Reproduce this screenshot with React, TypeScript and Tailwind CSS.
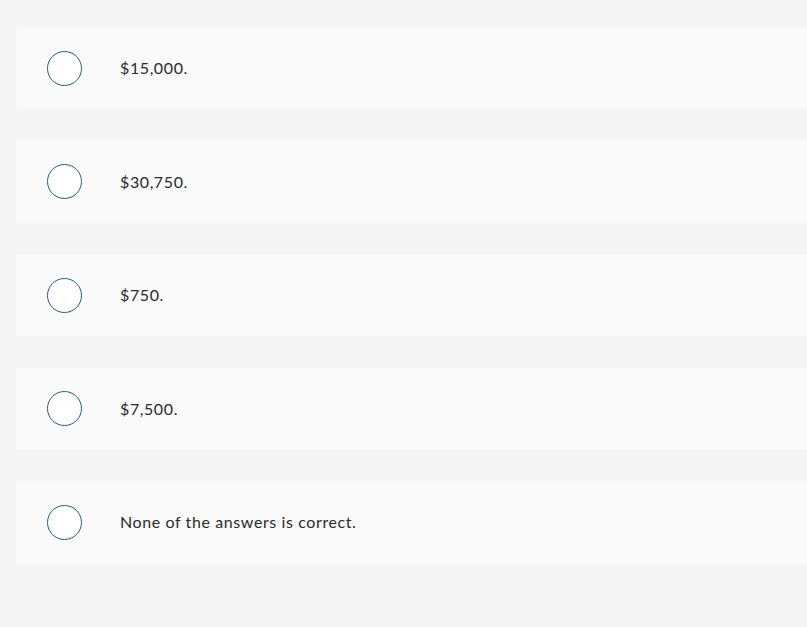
const options = ['$15,000.', '$30,750.', '$750.', '$7,500.', 'None of the answers is correct.'];

export default function App() {
  return (
    <div className="min-h-[627px] bg-[#f5f5f5] pl-4 pt-[27px]" style={{ fontFamily: '"Lato", "Noto Sans", sans-serif' }}>
      <div className="flex flex-col gap-[31.5px]">
        {options.map((opt) => (
          <div key={opt} className="flex h-[82px] items-center rounded-l-[3px] bg-[#fafafa] pl-[31px]">
            <span className="h-[35px] w-[35px] shrink-0 rounded-full border-[1.5px] border-[#2b5a88] bg-white" />
            <span className="ml-[38px] text-[16px] tracking-[0.6px] text-[#2a2a2a]">{opt}</span>
          </div>
        ))}
      </div>
    </div>
  );
}
